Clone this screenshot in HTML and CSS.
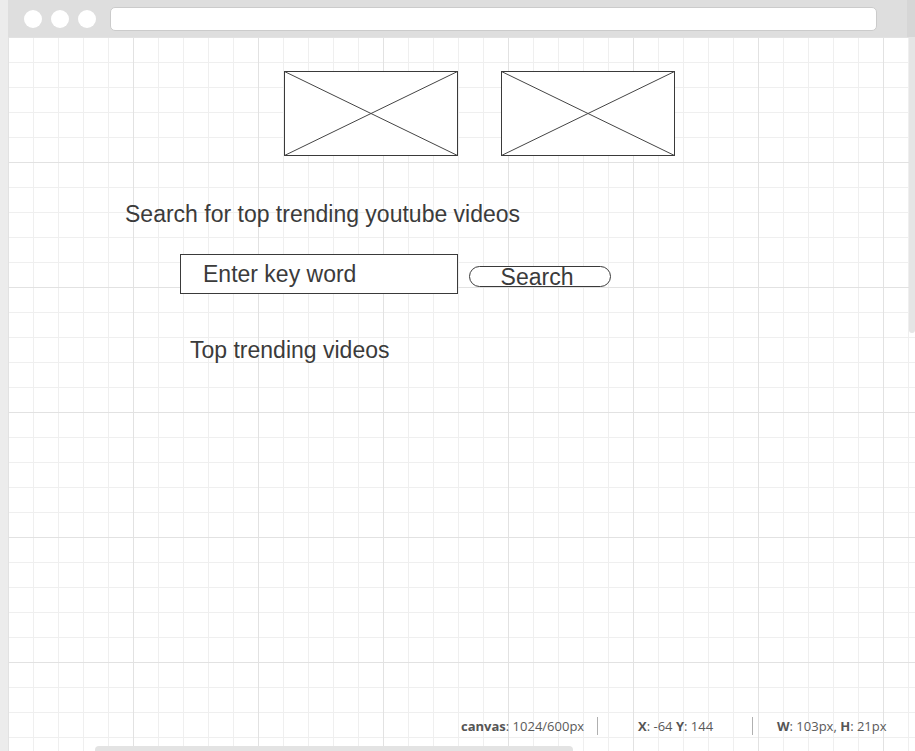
FILE: index.html
```html
<!DOCTYPE html>
<html>
<head>
<meta charset="utf-8">
<title>Wireframe</title>
<link rel="stylesheet" href="styles.css">
</head>
<body>
<div class="app">
  <div class="strip"></div>
  <div class="main">
    <div class="topbar">
      <div class="dots">
        <span class="dot"></span><span class="dot"></span><span class="dot"></span>
      </div>
      <div class="address"></div>
      <div class="spacer"></div>
      <div class="edge"></div>
    </div>
    <div class="canvas">
      <div class="images">
        <svg class="ph" viewBox="0 0 174 85" preserveAspectRatio="none">
          <rect x="0.5" y="0.5" width="173" height="84" fill="#fff" stroke="#3a3a3a" stroke-width="1"/>
          <line x1="0.5" y1="0.5" x2="173.5" y2="84.5" stroke="#444" stroke-width="1"/>
          <line x1="173.5" y1="0.5" x2="0.5" y2="84.5" stroke="#444" stroke-width="1"/>
        </svg>
        <svg class="ph" viewBox="0 0 174 85" preserveAspectRatio="none">
          <rect x="0.5" y="0.5" width="173" height="84" fill="#fff" stroke="#3a3a3a" stroke-width="1"/>
          <line x1="0.5" y1="0.5" x2="173.5" y2="84.5" stroke="#444" stroke-width="1"/>
          <line x1="173.5" y1="0.5" x2="0.5" y2="84.5" stroke="#444" stroke-width="1"/>
        </svg>
      </div>
      <div class="heading">Search for top trending youtube videos</div>
      <div class="search-row">
        <div class="input">Enter key word</div>
        <div class="btn">Search</div>
      </div>
      <div class="subheading">Top trending videos</div>

      <div class="vscroll"></div>
      <div class="status">
        <div class="seg seg1"><b>canvas</b>: 1024/600px</div>
        <div class="sep"></div>
        <div class="seg seg2"><b>X</b>: -64 <b>Y</b>: 144</div>
        <div class="sep"></div>
        <div class="seg seg3"><b>W</b>: 103px, <b>H</b>: 21px</div>
      </div>
      <div class="hscroll"></div>
    </div>
  </div>
</div>
</body>
</html>
```

FILE: styles.css
```css
html, body {
  margin: 0;
  padding: 0;
  width: 915px;
  height: 751px;
  overflow: hidden;
  background: #fff;
}

.app {
  display: flex;
  width: 915px;
  height: 751px;
  font-family: "Liberation Sans", Arial, sans-serif;
}

.strip {
  width: 8px;
  flex: none;
  background: #ececec;
}

.main {
  flex: 1;
  display: flex;
  flex-direction: column;
  min-width: 0;
}

.topbar {
  height: 37px;
  flex: none;
  display: flex;
  align-items: center;
  background: #dedede;
  padding-left: 16px;
  box-sizing: border-box;
}

.dots {
  display: flex;
  gap: 9px;
}

.dot {
  width: 18px;
  height: 18px;
  border-radius: 50%;
  background: #fff;
  display: block;
}

.address {
  margin-left: 14px;
  width: 767px;
  height: 24px;
  box-sizing: border-box;
  background: #fff;
  border: 1px solid #cbcbcb;
  border-radius: 5px;
}

.spacer {
  flex: 1;
}

.edge {
  width: 8px;
  align-self: stretch;
  background: #d6d6d6;
}

.canvas {
  position: relative;
  flex: 1;
  overflow: hidden;
  background-color: #fff;
  background-image:
    linear-gradient(to right, #e2e2e2 1px, transparent 1px),
    linear-gradient(to bottom, #e2e2e2 1px, transparent 1px),
    linear-gradient(to right, #efefef 1px, transparent 1px),
    linear-gradient(to bottom, #efefef 1px, transparent 1px);
  background-size: 125px 125px, 125px 125px, 25px 25px, 25px 25px;
  padding-top: 34px;
  box-sizing: border-box;
  color: #3b3b3b;
}

.images {
  display: flex;
  gap: 43px;
  padding-left: 276px;
}

.ph {
  width: 174px;
  height: 85px;
  display: block;
}

.heading {
  margin-top: 45px;
  margin-left: 117px;
  font-size: 23px;
  line-height: 26px;
}

.search-row {
  display: flex;
  align-items: flex-start;
  margin-top: 27px;
  margin-left: 172px;
}

.input {
  width: 278px;
  height: 40px;
  box-sizing: border-box;
  border: 1px solid #3a3a3a;
  background: #fff;
  display: flex;
  align-items: center;
  padding-left: 22px;
  padding-bottom: 1px;
  font-size: 23px;
  line-height: 26px;
}

.btn {
  margin-left: 11px;
  margin-top: 12px;
  width: 142px;
  height: 21px;
  box-sizing: border-box;
  border: 1px solid #3a3a3a;
  border-radius: 11px;
  background: #fff;
  font-size: 23px;
  line-height: 20px;
  text-align: center;
  padding-right: 6px;
  white-space: nowrap;
}

.subheading {
  margin-top: 43px;
  margin-left: 182px;
  font-size: 23px;
  line-height: 26px;
}

.vscroll {
  position: absolute;
  right: 0;
  top: 0;
  width: 6px;
  height: 296px;
  background: #e5e5e5;
  border-radius: 0 0 3px 3px;
}

.hscroll {
  position: absolute;
  left: 87px;
  top: 709px;
  width: 478px;
  height: 8px;
  background: #e3e3e3;
  border-radius: 4px;
}

.status {
  position: absolute;
  left: 453px;
  top: 680px;
  display: flex;
  align-items: stretch;
  height: 18px;
  font-family: "Open Sans", "Noto Sans", sans-serif;
  font-size: 13px;
  line-height: 18px;
  color: #5a5a5a;
  white-space: nowrap;
}

.status b {
  font-weight: 700;
  color: #555;
}

.seg1 {
  width: 136px;
}

.seg2 {
  width: 114px;
  padding-left: 40px;
}

.seg3 {
  padding-left: 24px;
}

.sep {
  width: 1px;
  background: #b0b0b0;
}
```
